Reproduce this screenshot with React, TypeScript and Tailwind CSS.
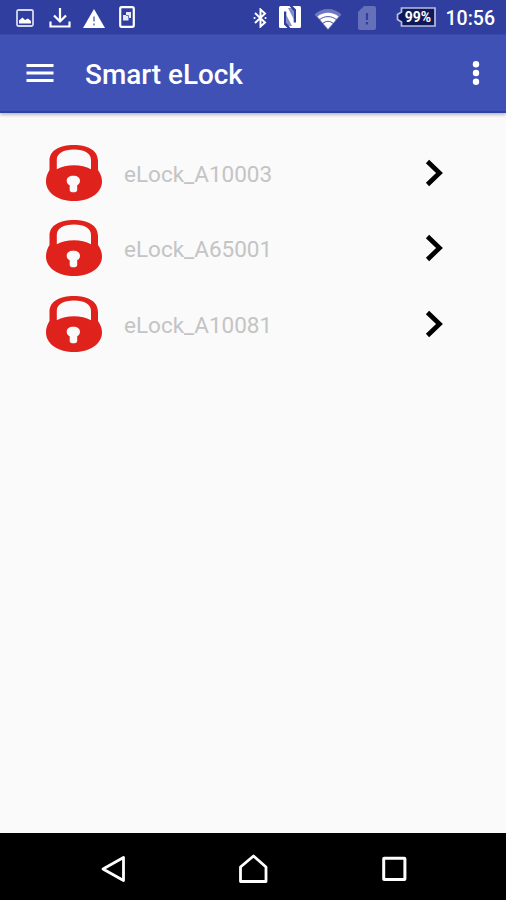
import React from 'react';

interface Lock {
  id: string;
  name: string;
}

const locks: Lock[] = [
  { id: '1', name: 'eLock_A10003' },
  { id: '2', name: 'eLock_A65001' },
  { id: '3', name: 'eLock_A10081' },
];

const LockIcon: React.FC = () => (
  <svg width="56" height="56" viewBox="0 0 56 56" className="shrink-0">
    {/* Body and shackle */}
    <path
      d="M3.5 25V16C3.5 5 14 0 27.8 0S52 5 52 16V25C54.500 28.500 56 32 56 36.500C56 48.500 43 56 28 56S0 48.500 0 36.500C0 32 1.200 28.500 3.500 25Z"
      fill="#df231c"
    />
    <path d="M10.800 24.200V15C10.800 8.500 17.500 4.600 28 4.600S45 8.500 45 15V24.200C40 21.500 34.500 20.200 28 20.200S15.500 21.500 10.800 24.200Z" fill="#fafafa" />
    {/* Keyhole */}
    <path
      d="M27.300 30.800C31.500 30.800 34 32.800 34 35.800C34 38 32.800 39.300 31.200 40.200V45C31.200 46.500 29.700 47.300 27.400 47.300S23.700 46.500 23.700 45V40.200C21.900 39.300 20.700 38 20.700 35.800C20.700 32.800 23.200 30.800 27.300 30.800Z"
      fill="#fafafa"
    />
  </svg>
);

const StatusBar: React.FC = () => (
  <div className="flex h-[34px] items-center bg-[#303f9f] text-white">
    {/* Notifications */}
    <svg width="18" height="18" viewBox="0 0 18 18" className="mt-[2px] ml-[16px]">
      <rect x="1" y="1" width="16" height="16" rx="1.500" fill="none" stroke="#d5d8f0" strokeWidth="1.800" />
      <path d="M3 14.500V11.500L6.500 8.500L9 11L12 9.500L15 12V14.500Z" fill="#fff" />
    </svg>
    <svg width="22" height="20" viewBox="0 0 22 20" className="mt-[2px] ml-[15px]" fill="none" stroke="#fff" strokeWidth="2.200">
      <path d="M11 0V13M5 7.500L11 13.500L17 7.500M1.500 13.500V18.500H20.500V13.500" />
    </svg>
    <svg width="22" height="19" viewBox="0 0 22 19" className="mt-[2px] ml-[12px]">
      <path d="M11 0L22 19H0Z" fill="#fff" />
      <path d="M11 7.500V12.500M11 14.500V16.500" stroke="#8790c8" strokeWidth="2" />
    </svg>
    <svg width="16" height="22" viewBox="0 0 16 22" className="ml-[14px]">
      <rect x="1.200" y="1.200" width="13.600" height="19.600" rx="1.500" fill="none" stroke="#fff" strokeWidth="2.200" />
      <path d="M7 6H12V12H9.500V14.500H4V9H7Z" fill="#e6e8f7" />
      <path d="M7 9.500H9.500V12" stroke="#6873b8" fill="none" />
    </svg>

    {/* System */}
    <svg width="14" height="20" viewBox="0 0 14 20" className="mt-[1px] ml-auto" fill="none" stroke="#fff" strokeWidth="2">
      <path d="M2 5L12 14.500L7.500 18.500V1.500L12 5.500L2 15" />
      <path d="M1.500 10H1.600M12.500 10H12.600" strokeLinecap="round" />
    </svg>
    <svg width="22" height="22" viewBox="0 0 22 22" className="ml-[12px]">
      <rect width="22" height="22" rx="1.500" fill="#fff" />
      <path d="M5 5.500V18.500L8.500 22H11.500L7.300 17V5.500Z" fill="#303f9f" />
      <path d="M7.300 9L13 20H8.500L7.300 18Z" fill="#303f9f" fillOpacity="0.600" />
      <path d="M17 16.500V3.500L13.500 0H10.500L14.700 5V16.500Z" fill="#303f9f" />
      <path d="M14.700 13L9 2H13.500L14.700 4Z" fill="#303f9f" fillOpacity="0.600" />
    </svg>
    <svg width="28" height="22" viewBox="0 0 28 22" className="mt-[3px] ml-[13px]">
      <path d="M0.500 6.500C8 -1 20 -1 27.500 6.500L14 22Z" fill="#7079bd" />
      <path d="M3.500 8.500C9.500 3.500 18.500 3.500 24.500 8.500L14 21Z" fill="#fff" />
      <path d="M5 12C10.500 7.500 17.500 7.500 23 12M8 16C12 12.500 16 12.500 20 16" fill="none" stroke="#303f9f" strokeWidth="0.900" />
    </svg>
    <svg width="18" height="24" viewBox="0 0 18 24" className="mt-[2px] ml-[16px]">
      <path d="M6 0H16Q18 0 18 2V22Q18 24 16 24H2Q0 24 0 22V6Z" fill="#6570b8" />
      <path d="M9 7V14M9 16V18.500" stroke="#303f9f" strokeWidth="2.200" />
    </svg>
    <div className="relative ml-[20px] h-[20px] w-[40px]">
      <svg width="40" height="20" viewBox="0 0 40 20">
        <path d="M5.500 1H39V19H5.500V15L1.500 12.500V7.500L5.500 5Z" fill="#101957" stroke="#b9bde0" strokeWidth="1.700" />
      </svg>
      <span className="absolute inset-y-0 left-[7px] w-[30px] text-center text-[14px] leading-[21px] font-bold">
        99%
      </span>
    </div>
    <span className="mt-[3px] mr-[11px] ml-[9px] w-[50px] text-right text-[19.5px] font-medium whitespace-nowrap">10:56</span>
  </div>
);

const AppBar: React.FC = () => (
  <header className="z-10 flex h-[79px] items-center border-t border-[#3949ab] border-b-2 border-b-[#2c43a5] bg-[#3f51b5] text-white shadow-[0_2px_3px_rgba(0,0,0,0.25)]">
    <button className="ml-[26px]" aria-label="Menu">
      <svg width="28" height="20" viewBox="0 0 28 20">
        <path d="M0.500 2.500H27.500M0.500 10H27.500M0.500 17.500H27.500" stroke="#fff" strokeWidth="3" />
      </svg>
    </button>
    <h1 className="ml-[31px] pt-[4px] text-[27.9px] font-medium">Smart eLock</h1>
    <button className="mr-[26px] ml-auto" aria-label="More options">
      <svg width="8" height="26" viewBox="0 0 8 26" fill="#fff">
        <circle cx="4" cy="4.200" r="3.200" />
        <circle cx="4" cy="13" r="3.200" />
        <circle cx="4" cy="21.800" r="3.200" />
      </svg>
    </button>
  </header>
);

const LockRow: React.FC<{ lock: Lock }> = ({ lock }) => (
  <li className="flex h-[75.5px] items-center pr-[63px] pl-[46px]">
    <LockIcon />
    <span className="ml-[22px] pt-[4px] text-[22.5px] text-[#c4c4c4]">{lock.name}</span>
    <svg width="18" height="28" viewBox="0 0 18 28" className="ml-auto" fill="none" stroke="#000" strokeWidth="4.700">
      <path d="M2.500 2.500L14.500 14L2.500 25.500" />
    </svg>
  </li>
);

const NavBar: React.FC = () => (
  <nav className="flex h-[67px] items-center bg-black pt-[4px]">
    <svg width="26" height="28" viewBox="0 0 26 28" className="ml-[100px]" fill="none" stroke="#fff" strokeWidth="2.800">
      <path d="M23.500 2.500V25.500L3 14Z" strokeLinejoin="round" />
    </svg>
    <svg width="30" height="30" viewBox="0 0 30 30" className="ml-[112px]" fill="none" stroke="#fff" strokeWidth="2.800">
      <path d="M2.500 13L15.500 2L28 13V27.500H2.500Z" strokeLinejoin="round" />
    </svg>
    <svg width="26" height="26" viewBox="0 0 26 26" className="ml-[113px]" fill="none" stroke="#fff" strokeWidth="3">
      <rect x="2.700" y="2.200" width="21.200" height="21.200" rx="0.500" />
    </svg>
  </nav>
);

const App: React.FC = () => {
  return (
    <div className="flex h-screen w-full flex-col bg-[#fafafa] font-['Roboto',sans-serif]">
      <StatusBar />
      <AppBar />
      <ul className="flex-1 pt-[22px]">
        {locks.map((lock) => (
          <LockRow key={lock.id} lock={lock} />
        ))}
      </ul>
      <NavBar />
    </div>
  );
};

export default App;
